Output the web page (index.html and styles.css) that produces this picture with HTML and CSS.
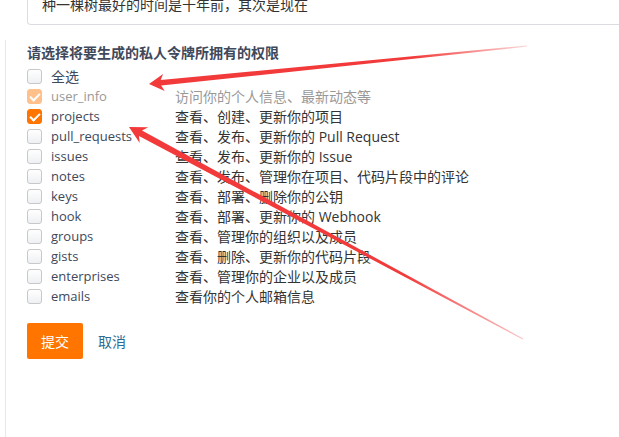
FILE: index.html
```html
<!DOCTYPE html>
<html lang="zh-CN">
<head>
    <meta charset="UTF-8">
    <title>私人令牌</title>
    <link rel="stylesheet" href="styles.css">
</head>
<body>
    <div class="desc-box">种一棵树最好的时间是十年前，其次是现在</div>
    <div class="panel">
        <div class="title">请选择将要生成的私人令牌所拥有的权限</div>
        <div class="row"><span class="cb"></span><span class="name cn">全选</span></div>
        <div class="row muted"><span class="cb checked disabled"></span><span class="name">user_info</span><span class="info">访问你的个人信息、最新动态等</span></div>
        <div class="row"><span class="cb checked"></span><span class="name">projects</span><span class="info">查看、创建、更新你的项目</span></div>
        <div class="row"><span class="cb"></span><span class="name">pull_requests</span><span class="info">查看、发布、更新你的 Pull Request</span></div>
        <div class="row"><span class="cb"></span><span class="name">issues</span><span class="info">查看、发布、更新你的 Issue</span></div>
        <div class="row"><span class="cb"></span><span class="name">notes</span><span class="info">查看、发布、管理你在项目、代码片段中的评论</span></div>
        <div class="row"><span class="cb"></span><span class="name">keys</span><span class="info">查看、部署、删除你的公钥</span></div>
        <div class="row"><span class="cb"></span><span class="name">hook</span><span class="info">查看、部署、更新你的 Webhook</span></div>
        <div class="row"><span class="cb"></span><span class="name">groups</span><span class="info">查看、管理你的组织以及成员</span></div>
        <div class="row"><span class="cb"></span><span class="name">gists</span><span class="info">查看、删除、更新你的代码片段</span></div>
        <div class="row"><span class="cb"></span><span class="name">enterprises</span><span class="info">查看、管理你的企业以及成员</span></div>
        <div class="row"><span class="cb"></span><span class="name">emails</span><span class="info">查看你的个人邮箱信息</span></div>
        <div class="actions">
            <button class="btn-submit">提交</button>
            <a class="btn-cancel" href="#">取消</a>
        </div>
    </div>

    <!-- 截图上的标注箭头 -->
    <svg class="marks" width="619" height="437" viewBox="0 0 619 437">
        <defs>
            <linearGradient id="fade1" gradientUnits="userSpaceOnUse" x1="149" y1="84" x2="527" y2="46">
                <stop offset="0.7" stop-color="#f23a3a" stop-opacity="1"/>
                <stop offset="1" stop-color="#f23a3a" stop-opacity="0.2"/>
            </linearGradient>
            <linearGradient id="fade2" gradientUnits="userSpaceOnUse" x1="129" y1="127" x2="523" y2="339">
                <stop offset="0.7" stop-color="#f23a3a" stop-opacity="1"/>
                <stop offset="1" stop-color="#f23a3a" stop-opacity="0.3"/>
            </linearGradient>
        </defs>
        <polygon fill="url(#fade1)" points="149,84 164.7,91 161.2,85.6 527,46.6 527,45.4 160.7,80 163.1,74"/>
        <polygon fill="url(#fade2)" points="129,127 139.7,143 139,136 522.8,339.5 523.2,338.5 142,130.4 148.3,127.2"/>
    </svg>
</body>
</html>
```

FILE: styles.css
```css
body {
    margin: 0;
    font-family: "Open Sans", "Noto Sans CJK SC", sans-serif;
    font-size: 14px;
    color: #333;
    background: #fff;
    overflow: hidden;
}
.desc-box {
    margin: -22px 0 0 27px;
    height: 47px;
    padding: 16px 14px 0;
    box-sizing: border-box;
    border: 1px solid #dcdde1;
    border-right: none;
    border-radius: 4px 0 0 4px;
    line-height: 20px;
    color: #333;
}
.panel {
    margin: 15px 0 0 5px;
    padding: 3px 0 80px 21px;
    border-left: 1px solid #e8e8e8;
}
.title {
    font-weight: bold;
    color: #40485b;
    line-height: 20px;
    margin-bottom: 3px;
}
.row {
    display: flex;
    align-items: center;
    height: 20px;
}
.cb {
    position: relative;
    flex: none;
    width: 15px;
    height: 15px;
    box-sizing: border-box;
    border: 1px solid #c6c8cc;
    border-radius: 3px;
    background: linear-gradient(#fff, #eef0f3);
    margin-right: 9px;
}
.cb.checked {
    border-color: #ff7500;
    background: #ff7500;
}
.cb.checked::after {
    content: "";
    position: absolute;
    left: 4px;
    top: 1px;
    width: 4px;
    height: 8px;
    border: solid #fff;
    border-width: 0 2px 2px 0;
    transform: rotate(45deg);
}
.cb.disabled {
    border-color: #ffc08c;
    background: #ffc08c;
}
.name {
    width: 124px;
    font-size: 13px;
    color: #40485b;
}
.name.cn {
    font-size: 14px;
}
.info {
    color: #333;
}
.muted .name,
.muted .info {
    color: #999;
}
.actions {
    display: flex;
    align-items: center;
    margin-top: 17px;
}
.btn-submit {
    width: 56px;
    height: 36px;
    border: none;
    border-radius: 2px;
    background: #ff7500;
    color: #fff;
    font-family: inherit;
    font-size: 14px;
    cursor: pointer;
}
.btn-cancel {
    margin-left: 15px;
    color: #2b6c94;
    text-decoration: none;
}
.marks {
    position: absolute;
    left: 0;
    top: 0;
    pointer-events: none;
}
```
